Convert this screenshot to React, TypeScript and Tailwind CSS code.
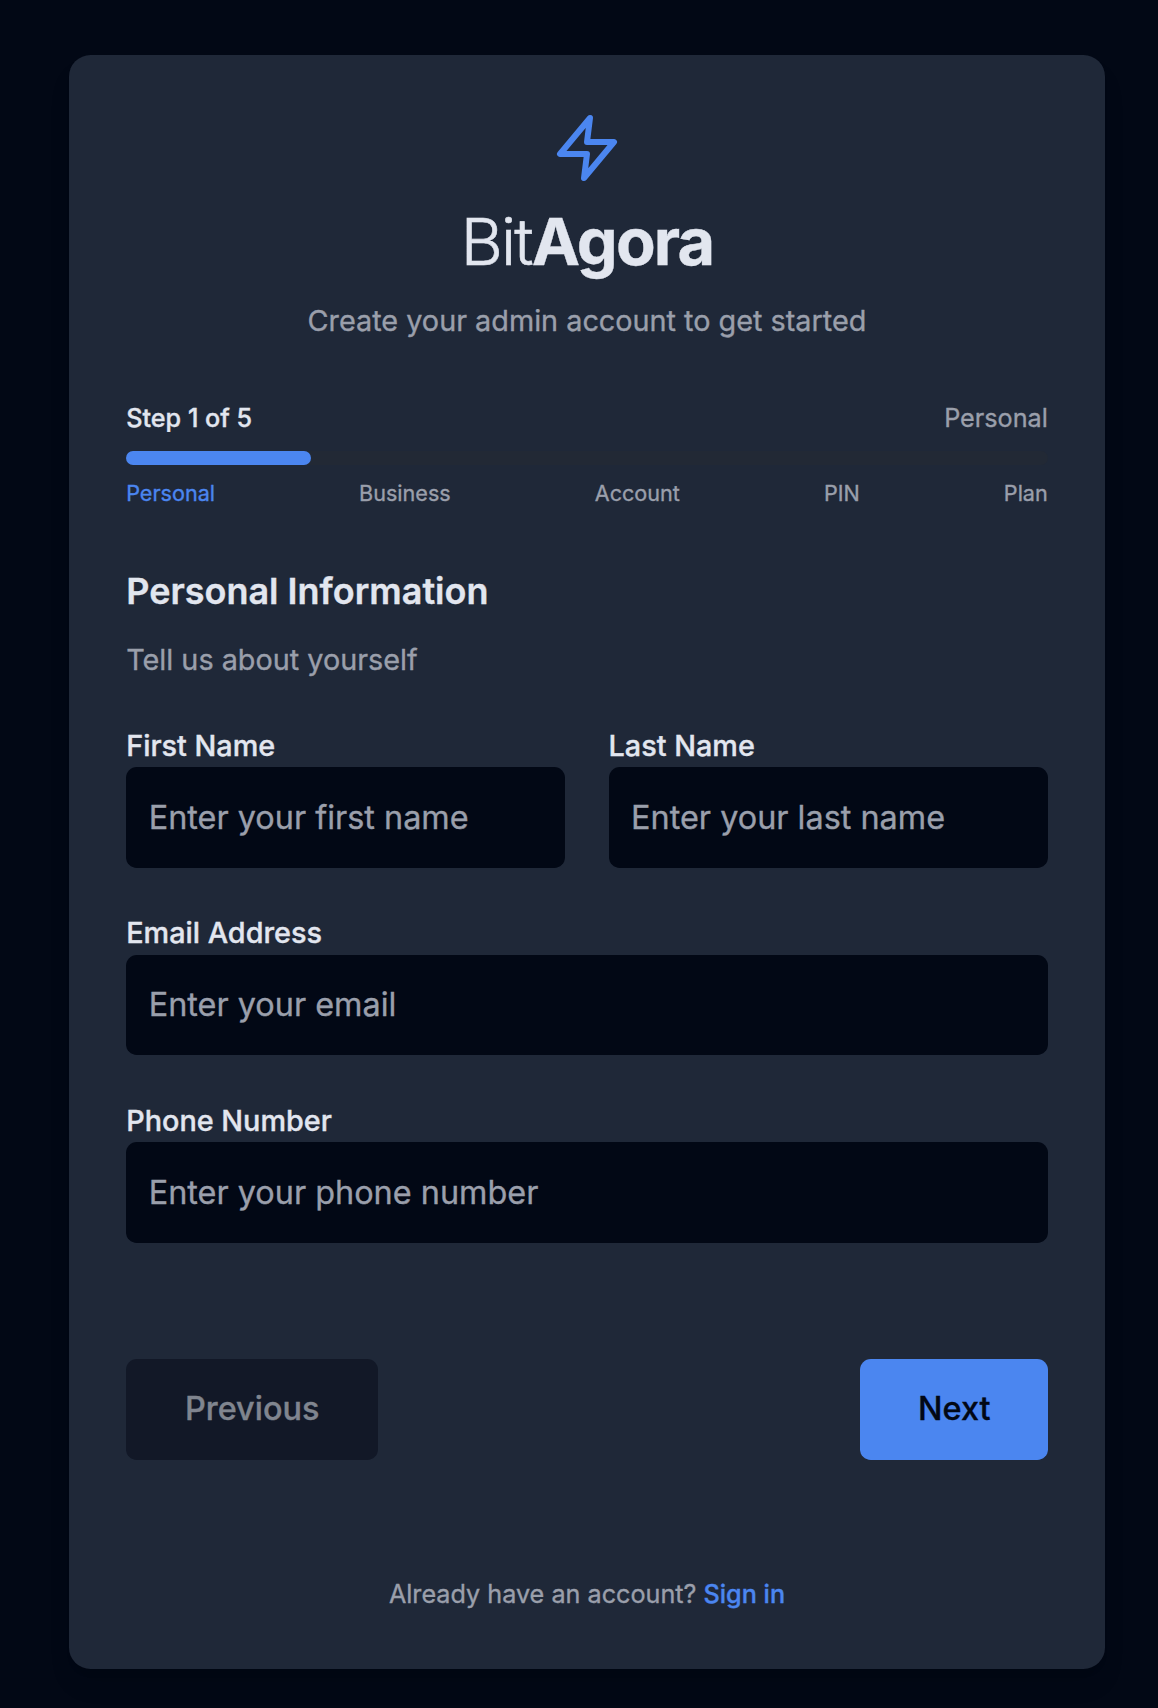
import React from "react";

const steps = ["Personal", "Business", "Account", "PIN", "Plan"];

function Field({ label, placeholder, type = "text" }: { label: string; placeholder: string; type?: string }) {
  return (
    <label className="block min-w-0">
      <span className="block text-[28.8px] font-medium leading-[43.2px] text-[#e2e6ef]">{label}</span>
      <input
        type={type}
        placeholder={placeholder}
        className="block h-[100.8px] w-full rounded-[10.8px] bg-[#020815] px-[22.5px] text-[32.4px] text-[#e2e6ef] outline-none placeholder:text-[#9a9fab] placeholder:opacity-100"
      />
    </label>
  );
}

export default function App() {
  const current = 0;
  return (
    <div className="min-h-[1708px] bg-[#020815] pt-[54.6px] pl-[68.6px] font-['Inter',sans-serif] antialiased [-webkit-text-stroke:0.35px]">
      <main className="flex h-[1614.4px] w-[1036.8px] flex-col rounded-[21.6px] bg-[#1f2838] p-[57.6px] shadow-[0_18px_27px_-5px_rgb(0_0_0/0.1),0_7px_11px_-7px_rgb(0_0_0/0.1)]">
        <header className="flex flex-col items-center">
          <svg
            className="size-[72px] text-[#4b86f0]"
            viewBox="0 0 24 24"
            fill="none"
            stroke="currentColor"
            strokeWidth="2"
            strokeLinecap="round"
            strokeLinejoin="round"
          >
            <polygon points="13 2 3 14 12 14 11 22 21 10 12 10 13 2" />
          </svg>
          <h1 className="mt-[21.6px] text-[64.8px] font-light leading-[72px] tracking-[-0.028em] text-[#e2e6ef]">
            <span className="[-webkit-text-stroke:0.6px]">Bit</span>
            <span className="font-bold">Agora</span>
          </h1>
          <p className="mt-[21.6px] text-[28.8px] leading-[43.2px] text-[#9a9fab]">
            Create your admin account to get started
          </p>
        </header>

        <section className="mt-[57.6px]">
          <div className="flex justify-between text-[25.2px] leading-[36px]">
            <span className="font-medium text-[#e2e6ef]">Step {current + 1} of 5</span>
            <span className="text-[#9a9fab]">{steps[current]}</span>
          </div>
          <div className="mt-[14.4px] h-[14.4px] rounded-full bg-[#222935]">
            <div className="h-full w-1/5 rounded-full bg-[#4b86f0]" />
          </div>
          <div className="mt-[14.4px] flex justify-between text-[21.6px] leading-[28.8px] text-[#9a9fab]">
            {steps.map((step, i) => (
              <span key={step} className={i === current ? "text-[#4b86f0]" : ""}>
                {step}
              </span>
            ))}
          </div>
        </section>

        <form className="mt-[57.6px] flex flex-col">
          <h2 className="text-[36px] font-semibold leading-[50.4px] text-[#e2e6ef]">Personal Information</h2>
          <p className="mt-[21.6px] text-[28.8px] leading-[43.2px] text-[#9a9fab]">Tell us about yourself</p>
          <div className="mt-[43.2px] grid grid-cols-2 gap-[43.2px]">
            <Field label="First Name" placeholder="Enter your first name" />
            <Field label="Last Name" placeholder="Enter your last name" />
            <div className="col-span-2">
              <Field label="Email Address" placeholder="Enter your email" type="email" />
            </div>
            <div className="col-span-2">
              <Field label="Phone Number" placeholder="Enter your phone number" type="tel" />
            </div>
          </div>
          <div className="mt-[116.4px] flex justify-between text-[32.4px] font-medium">
            <button
              type="button"
              disabled
              className="h-[100.8px] w-[252px] rounded-[10.8px] bg-[#121827] text-[#80858f]"
            >
              Previous
            </button>
            <button type="button" className="h-[100.8px] w-[188px] rounded-[10.8px] bg-[#4b86f0] pl-px text-[#020815]">
              Next
            </button>
          </div>
        </form>

        <p className="mt-[116.4px] text-center text-[25.2px] leading-[36px] text-[#9a9fab]">
          Already have an account?{" "}
          <a href="#" className="font-medium text-[#4b86f0]">
            Sign in
          </a>
        </p>
      </main>
    </div>
  );
}
